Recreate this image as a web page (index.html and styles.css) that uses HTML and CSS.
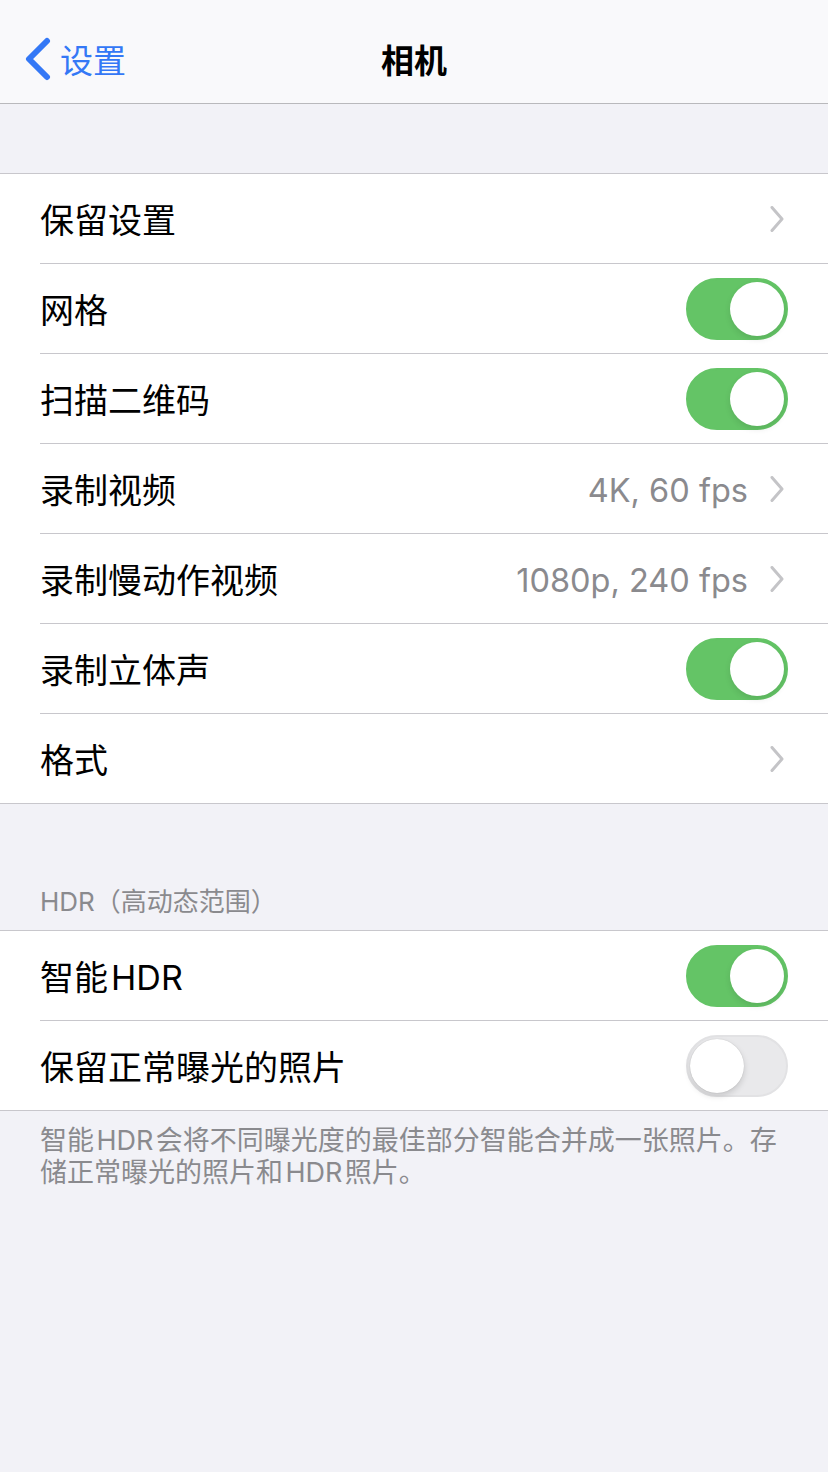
FILE: index.html
```html
<!DOCTYPE html>
<html lang="zh-CN">
<head>
    <meta charset="UTF-8">
    <meta name="viewport" content="width=device-width, initial-scale=1.0">
    <title>相机</title>
    <link rel="stylesheet" href="styles.css">
</head>
<body>
    <header class="nav">
        <a class="back" href="#">
            <svg class="back-icon" width="30" height="44" viewBox="0 0 30 44">
                <path d="M24 4 L6 22 L24 40" fill="none" stroke="#3478f6" stroke-width="6" stroke-linecap="round" stroke-linejoin="round"/>
            </svg>
            <span>设置</span>
        </a>
        <h1 class="title">相机</h1>
    </header>

    <div class="spacer-top"></div>

    <ul class="group">
        <li class="row">
            <span class="label">保留设置</span>
            <span class="chevron"></span>
        </li>
        <li class="row">
            <span class="label">网格</span>
            <span class="toggle on"></span>
        </li>
        <li class="row">
            <span class="label">扫描二维码</span>
            <span class="toggle on"></span>
        </li>
        <li class="row">
            <span class="label">录制视频</span>
            <span class="value">4K, 60 fps</span>
            <span class="chevron"></span>
        </li>
        <li class="row">
            <span class="label">录制慢动作视频</span>
            <span class="value">1080p, 240 fps</span>
            <span class="chevron"></span>
        </li>
        <li class="row">
            <span class="label">录制立体声</span>
            <span class="toggle on"></span>
        </li>
        <li class="row">
            <span class="label">格式</span>
            <span class="chevron"></span>
        </li>
    </ul>

    <h2 class="section-header">HDR（高动态范围）</h2>

    <ul class="group">
        <li class="row">
            <span class="label">智能&#8202;HDR</span>
            <span class="toggle on"></span>
        </li>
        <li class="row">
            <span class="label">保留正常曝光的照片</span>
            <span class="toggle"></span>
        </li>
    </ul>

    <p class="footer">智能&#8202;HDR&#8202;会将不同曝光度的最佳部分智能合并成一张照片。存储正常曝光的照片和&#8202;HDR&#8202;照片。</p>
</body>
</html>
```

FILE: styles.css
```css
html, body {
    height: 100%;
}

body {
    margin: 0;
    background-color: #f2f2f7;
    font-family: Inter, "Noto Sans CJK SC", sans-serif;
    color: #000;
}

.nav {
    height: 104px;
    box-sizing: border-box;
    padding-top: 14px;
    background-color: #f9f9fb;
    border-bottom: 1px solid #b9b9bc;
    display: flex;
    align-items: center;
    justify-content: center;
    position: relative;
}

.back {
    position: absolute;
    left: 23px;
    top: 14px;
    bottom: 0;
    display: flex;
    align-items: center;
    gap: 7px;
    color: #3478f6;
    text-decoration: none;
    font-size: 33px;
}

.back-icon {
    display: block;
}

.title {
    margin: 0;
    font-size: 33px;
    font-weight: 700;
}

.spacer-top {
    height: 69px;
}

.group {
    list-style: none;
    margin: 0;
    padding: 0 0 0 40px;
    background-color: #fff;
    border-top: 1px solid #c8c7cc;
    border-bottom: 1px solid #c8c7cc;
}

.row {
    height: 90px;
    box-sizing: border-box;
    display: flex;
    align-items: center;
    padding-right: 40px;
    border-bottom: 1px solid #c8c7cc;
}

.row:last-child {
    border-bottom: none;
    height: 89px;
}

.label {
    flex: 1;
    font-size: 34px;
}

.value {
    font-size: 32.5px;
    color: #8a8a8e;
    margin-right: 22px;
    padding-top: 3px;
}

.chevron {
    width: 14px;
    height: 26px;
    margin-right: 4px;
    background: no-repeat center / 14px 26px url("data:image/svg+xml,%3Csvg xmlns='http://www.w3.org/2000/svg' width='14' height='26' viewBox='0 0 14 26'%3E%3Cpath d='M2 1.5 L12 13 L2 24.5' fill='none' stroke='%23c4c4c7' stroke-width='3' stroke-linecap='round' stroke-linejoin='round'/%3E%3C/svg%3E");
}

.toggle {
    width: 102px;
    height: 62px;
    box-sizing: border-box;
    border-radius: 31px;
    background-color: #e9e9eb;
    border: 2px solid #e2e2e4;
    position: relative;
}

.toggle::after {
    content: "";
    position: absolute;
    top: 2px;
    left: 2px;
    width: 54px;
    height: 54px;
    border-radius: 50%;
    background-color: #fff;
    box-shadow: 0 3px 6px rgba(0, 0, 0, 0.15), 0 0 1px rgba(0, 0, 0, 0.2);
}

.toggle.on {
    background-color: #64c466;
    border-color: #64c466;
}

.toggle.on::after {
    left: auto;
    right: 2px;
    box-shadow: 0 3px 6px rgba(0, 0, 0, 0.1);
}

.section-header {
    margin: 0;
    padding: 82px 40px 12px;
    font-size: 26px;
    font-weight: 400;
    line-height: 32px;
    color: #8a8a8e;
}

.footer {
    margin: 0;
    padding: 14px 40px 0;
    font-size: 27px;
    line-height: 32px;
    color: #8a8a8e;
}
```
